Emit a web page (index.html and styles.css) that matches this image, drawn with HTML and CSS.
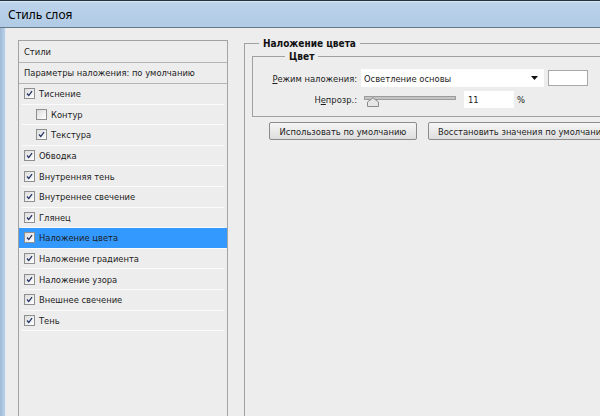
FILE: index.html
```html
<!DOCTYPE html>
<html lang="ru">
<head>
    <meta charset="UTF-8">
    <title>Стиль слоя</title>
    <link rel="stylesheet" href="styles.css">
</head>
<body>
    <div class="window">
        <div class="titlebar">Стиль слоя</div>
        <div class="client">
            <div class="frame-left"></div>
            <div class="main">
                <!-- Styles list -->
                <div class="styles-panel">
                    <div class="panel-head">Стили</div>
                    <div class="panel-head second">Параметры наложения: по умолчанию</div>
                    <ul class="style-list">
                        <li class="style-item"><span class="cb checked"><svg viewBox="0 0 11 11"><path d="M2.5 5.5 L4.6 8 L8.6 2.6"/></svg></span>Тиснение</li>
                        <li class="style-item sub"><span class="cb"></span>Контур</li>
                        <li class="style-item sub"><span class="cb checked"><svg viewBox="0 0 11 11"><path d="M2.5 5.5 L4.6 8 L8.6 2.6"/></svg></span>Текстура</li>
                        <li class="style-item"><span class="cb checked"><svg viewBox="0 0 11 11"><path d="M2.5 5.5 L4.6 8 L8.6 2.6"/></svg></span>Обводка</li>
                        <li class="style-item"><span class="cb checked"><svg viewBox="0 0 11 11"><path d="M2.5 5.5 L4.6 8 L8.6 2.6"/></svg></span>Внутренняя тень</li>
                        <li class="style-item"><span class="cb checked"><svg viewBox="0 0 11 11"><path d="M2.5 5.5 L4.6 8 L8.6 2.6"/></svg></span>Внутреннее свечение</li>
                        <li class="style-item"><span class="cb checked"><svg viewBox="0 0 11 11"><path d="M2.5 5.5 L4.6 8 L8.6 2.6"/></svg></span>Глянец</li>
                        <li class="style-item active"><span class="cb checked"><svg viewBox="0 0 11 11"><path d="M2.5 5.5 L4.6 8 L8.6 2.6"/></svg></span>Наложение цвета</li>
                        <li class="style-item"><span class="cb checked"><svg viewBox="0 0 11 11"><path d="M2.5 5.5 L4.6 8 L8.6 2.6"/></svg></span>Наложение градиента</li>
                        <li class="style-item"><span class="cb checked"><svg viewBox="0 0 11 11"><path d="M2.5 5.5 L4.6 8 L8.6 2.6"/></svg></span>Наложение узора</li>
                        <li class="style-item"><span class="cb checked"><svg viewBox="0 0 11 11"><path d="M2.5 5.5 L4.6 8 L8.6 2.6"/></svg></span>Внешнее свечение</li>
                        <li class="style-item"><span class="cb checked"><svg viewBox="0 0 11 11"><path d="M2.5 5.5 L4.6 8 L8.6 2.6"/></svg></span>Тень</li>
                    </ul>
                </div>

                <!-- Settings -->
                <div class="settings">
                    <fieldset class="group outer">
                        <legend>Наложение цвета</legend>
                        <fieldset class="group inner">
                            <legend>Цвет</legend>
                            <div class="form-grid">
                                <label class="field-label"><u>Р</u>ежим наложения:</label>
                                <div class="select">Осветление основы
                                    <svg class="arrow" viewBox="0 0 7 4"><path d="M0 0 H7 L3.5 4 Z"/></svg>
                                </div>
                                <span class="swatch"></span>

                                <label class="field-label">Н<u>е</u>прозр.:</label>
                                <div class="opacity-row">
                                    <div class="slider">
                                        <div class="track"></div>
                                        <svg class="thumb" viewBox="0 0 12 10"><path d="M0.5 9.5 V5 L6 0.8 L11.5 5 V9.5 Z"/></svg>
                                    </div>
                                    <div class="number">11</div>
                                    <span class="unit">%</span>
                                </div>
                            </div>
                        </fieldset>
                        <div class="buttons">
                            <button class="btn first">Использовать по умолчанию</button>
                            <button class="btn">Восстановить значения по умолчанию</button>
                        </div>
                    </fieldset>
                </div>
            </div>
        </div>
    </div>
</body>
</html>
```

FILE: styles.css
```css
/* Base */
body {
    margin: 0;
    background: #ededed;
    font-family: "DejaVu Sans Condensed", Tahoma, sans-serif;
    font-size: 9.3px;
    color: #1c1c1c;
    overflow: hidden;
}

.window {
    width: 600px;
    height: 416px;
    overflow: hidden;
}

/* Title bar */
.titlebar {
    height: 26px;
    display: flex;
    align-items: center;
    padding-left: 8px;
    border-top: 1px solid #24313e;
    border-bottom: 1px solid #65788c;
    background: linear-gradient(#dce8f4 0, #bad2ea 2px, #b2cbe5 100%);
    font-family: "Noto Sans", sans-serif;
    font-size: 12px;
    color: #000;
}

.client {
    display: flex;
    height: 388px;
}

.frame-left {
    width: 5px;
    flex: none;
    background: linear-gradient(90deg, #9fb9d6, #bad1ea);
    border-right: 1px solid #e4e9ef;
}

.main {
    flex: 1;
    min-width: 0;
    display: flex;
    gap: 16px;
    padding: 12px 0 0 12px;
}

/* Styles panel */
.styles-panel {
    width: 208px;
    flex: none;
    border: 1px solid #a3a3a3;
    border-bottom: none;
}

.panel-head {
    height: 21px;
    line-height: 21px;
    padding-left: 5px;
    border-bottom: 1px solid #b5b5b5;
}

.panel-head.second {
    height: 20px;
    line-height: 20px;
}

.style-list {
    list-style: none;
    margin: 0;
    padding: 0;
}

.style-item {
    height: 19.6px;
    display: flex;
    align-items: center;
    gap: 4px;
    margin: 0 3px;
    padding-left: 2px;
    border-bottom: 1px solid #fbfbfb;
}

.style-item.sub {
    padding-left: 14px;
}

.style-item.active {
    margin: 0;
    padding-left: 5px;
    background: #3399ff;
}

.cb {
    width: 9px;
    height: 9px;
    flex: none;
    border: 1px solid #8e8f8f;
    background: linear-gradient(135deg, #dcdcdc, #ffffff);
}

.cb svg {
    display: block;
    width: 9px;
    height: 9px;
    fill: none;
    stroke: #243466;
    stroke-width: 1.6;
    overflow: visible;
}

/* Settings */
.settings {
    flex: none;
    width: 420px;
}

.group {
    margin: 0;
    padding: 0 0 0 7px;
    border: none;
    border-top: 1px solid #a0a0a0;
    border-left: 1px solid #a0a0a0;
    min-inline-size: auto;
}

.group > legend {
    margin-left: 7px;
    padding: 0 4px;
    font-weight: bold;
    font-size: 10px;
    line-height: 13px;
    color: #111;
}

.group.outer {
    width: 420px;
    height: 420px;
    margin-top: -3px;
}

.group.inner {
    width: 400px;
    padding: 6px 0 8px 16px;
    border-bottom: 1px solid #a0a0a0;
}

.group.inner > legend {
    margin-left: 16px;
}

.form-grid {
    display: grid;
    grid-template-columns: 88px 183px 40px;
    column-gap: 4px;
    row-gap: 4px;
    align-items: center;
}

.field-label {
    text-align: right;
    white-space: nowrap;
}

.select {
    height: 18px;
    display: flex;
    align-items: center;
    justify-content: space-between;
    padding: 0 6px 0 3px;
    background: #fff;
    box-sizing: border-box;
}

.arrow {
    width: 7px;
    height: 4px;
    fill: #111;
}

.swatch {
    height: 16px;
    box-sizing: border-box;
    border: 1px solid #a8a8a8;
    background: #fff;
}

.opacity-row {
    grid-column: 2 / 4;
    display: flex;
    align-items: center;
    height: 17px;
}

.slider {
    position: relative;
    width: 92px;
    height: 17px;
    margin-left: 3px;
}

.track {
    margin-top: 5px;
    height: 2px;
    border: 1px solid #9c9c9c;
    background: #c4c4c4;
}

.thumb {
    position: absolute;
    left: 3px;
    top: 6px;
    width: 12px;
    height: 10px;
    fill: #e6e6e6;
    stroke: #8a8a8a;
    stroke-width: 1;
}

.number {
    width: 50px;
    height: 17px;
    margin-left: 8px;
    padding-left: 4px;
    box-sizing: border-box;
    line-height: 17px;
    background: #fff;
}

.unit {
    margin-left: 3px;
}

/* Buttons */
.buttons {
    display: flex;
    gap: 11px;
    margin: 5px 0 0 17px;
}

.btn {
    height: 18px;
    padding: 0 9px;
    border: 1px solid #8b8b8b;
    border-radius: 2px;
    background: linear-gradient(#f6f6f6, #dedede);
    font-family: inherit;
    font-size: 9.3px;
    color: #1c1c1c;
    white-space: nowrap;
    flex: none;
}

.btn.first {
    width: 148px;
}
```
